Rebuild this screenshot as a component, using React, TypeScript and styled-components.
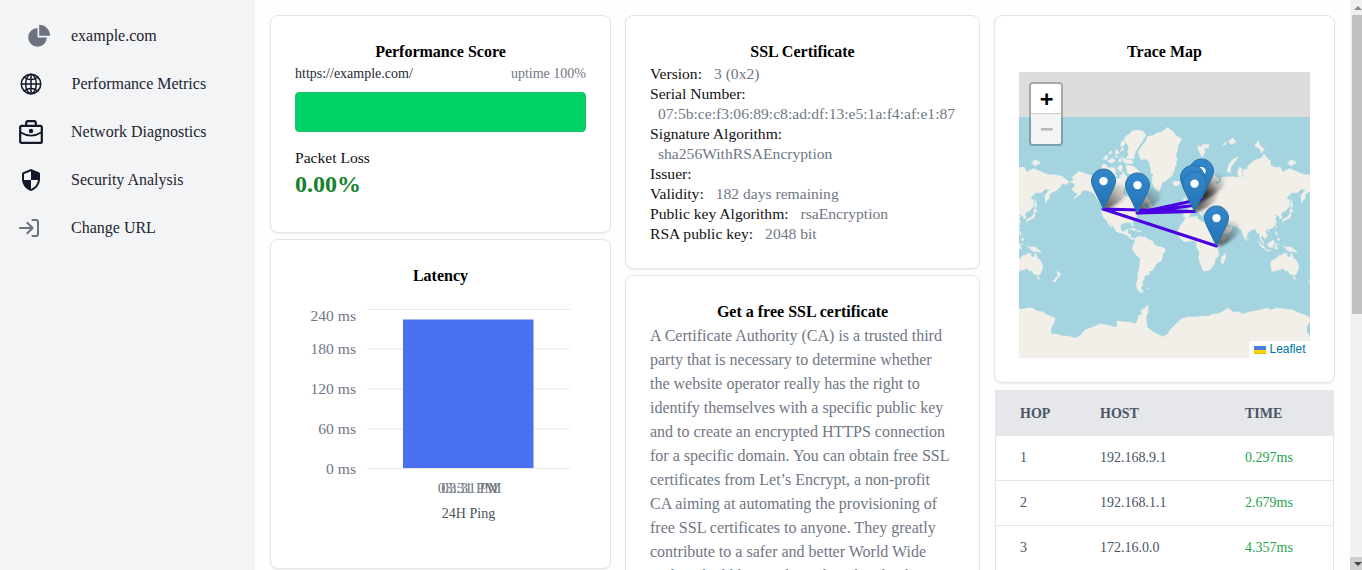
import React from "react";
import styled, { createGlobalStyle } from "styled-components";
import { IoGlobeOutline } from "react-icons/io5";

const GlobalStyle = createGlobalStyle`
  *, *::before, *::after { box-sizing: border-box; }
  html, body { margin: 0; height: 100%; overflow: hidden; background: #fefefe; }
  body { font-family: "Liberation Serif", "Times New Roman", serif; font-size: 16px; line-height: 24px; color: #111827; }
  svg { display: block; flex: none; }
`;

const Page = styled.div`
  display: flex;
  height: 570px;
  overflow: hidden;
`;

const Sidebar = styled.nav`
  width: 255px;
  flex: none;
  background: #f3f4f6;
  padding: 12px 11px;
`;

const NavItem = styled.a<{ $indent?: number }>`
  display: flex;
  align-items: center;
  height: 48px;
  padding-left: ${(p) => p.$indent ?? 8}px;
  color: #1c2430;
`;

const NavIcon = styled.span<{ $muted?: boolean }>`
  display: flex;
  width: 24px;
  color: ${(p) => (p.$muted ? "#6b7280" : "#111827")};
`;

const NavLabel = styled.span<{ $gap?: number }>`
  margin-left: ${(p) => p.$gap ?? 28}px;
  white-space: nowrap;
`;

const Content = styled.main`
  flex: 1;
  min-width: 0;
  display: grid;
  grid-template-columns: 341px 355px 341px;
  column-gap: 14px;
  align-items: start;
  padding: 15px 0 0 15px;
`;

const Column = styled.div`
  display: flex;
  flex-direction: column;
  gap: 6px;
`;

const Card = styled.section<{ $height: number }>`
  height: ${(p) => p.$height}px;
  flex: none;
  padding: 24px;
  background: #fff;
  border: 1px solid #e3e5e8;
  border-radius: 8px;
  box-shadow: 0 1px 2px rgba(0, 0, 0, 0.07);
`;

const CardTitle = styled.h2`
  margin: 0;
  font-size: 16px;
  line-height: 24px;
  font-weight: 700;
  text-align: center;
  color: #000;
`;

const ScoreRow = styled.div`
  display: flex;
  justify-content: space-between;
  font-size: 14px;
  line-height: 20px;
  color: #1f2937;
`;

const Muted = styled.span`
  color: #6f7784;
`;

const ScoreBar = styled.div`
  height: 40px;
  margin: 8px 0 16px;
  border-radius: 4px;
  background: #00d166;
  border: 1px solid #22bd68;
`;

const StatLabel = styled.div`
  font-size: 15.6px;
  line-height: 20px;
  color: #111;
`;

const StatValue = styled.div`
  font-size: 24px;
  line-height: 32px;
  font-weight: 700;
  color: #15832e;
`;

const Details = styled.dl`
  margin: 0;
  font-size: 15.6px;
  line-height: 20px;
`;

const Detail = styled.div`
  display: flex;
  flex-wrap: wrap;
  column-gap: 4px;
`;

const Term = styled.dt`
  color: #111;
`;

const Value = styled.dd`
  margin: 0 0 0 8px;
  color: #6f7784;
`;

const Paragraph = styled.p`
  margin: 0;
  color: #6f7784;
  white-space: pre-line;
`;

const Chart = styled.svg`
  margin-top: 12px;
  font-family: "Liberation Serif", serif;
`;

const MapFrame = styled.div`
  position: relative;
  width: 291px;
  height: 286px;
  margin-top: 8px;
  overflow: hidden;
  background: #ddd;
`;

const ZoomControl = styled.div`
  position: absolute;
  top: 10px;
  left: 10px;
  width: 34px;
  border: 2px solid rgba(0, 0, 0, 0.24);
  border-radius: 4px;
  background-clip: padding-box;
  overflow: hidden;
`;

const ZoomButton = styled.div<{ $disabled?: boolean }>`
  height: 30px;
  font: bold 22px/29px "DejaVu Sans Mono", monospace;
  text-indent: 1px;
  text-align: center;
  color: ${(p) => (p.$disabled ? "#bbb" : "#000")};
  background: ${(p) => (p.$disabled ? "#f4f4f4" : "#fff")};
  border-bottom: ${(p) => (p.$disabled ? "0" : "1px solid #ccc")};
`;

const Attribution = styled.div`
  position: absolute;
  right: 0;
  bottom: 0;
  display: flex;
  align-items: center;
  gap: 3px;
  height: 17px;
  padding: 0 4.5px 0 5px;
  background: rgba(255, 255, 255, 0.85);
  color: #0078a8;
  font: 12px/17px "Liberation Sans", Arial, sans-serif;
`;

const HopTable = styled.table`
  width: 339px;
  margin: 1px 0 0 1px;
  border-spacing: 0;
  table-layout: fixed;
  font-size: 14px;
  line-height: 20px;
  border: 1px solid #e3e5e8;
  border-top: 0;
`;

const HeadCell = styled.th<{ $width?: number }>`
  width: ${(p) => (p.$width ? p.$width + "px" : "auto")};
  height: 46px;
  padding: 2px 0 0 24px;
  text-align: left;
  color: #4b5563;
  background: #e5e7eb;
`;

const Cell = styled.td<{ $good?: boolean }>`
  height: 45px;
  padding: 0 0 0 24px;
  background: #fff;
  border-bottom: 1px solid #e3e5e8;
  color: ${(p) => (p.$good ? "#1fa350" : "#4b5563")};
`;

const Scrollbar = styled.div`
  width: 12px;
  flex: none;
  display: flex;
  flex-direction: column;
  justify-content: space-between;
  background: #f1f1f1;
`;

const ScrollThumb = styled.div`
  height: 299px;
  margin: 0 0 auto 2px;
  background: #c1c1c1;
`;

const ScrollArrow = styled.div<{ $down?: boolean }>`
  height: ${(p) => (p.$down ? 13 : 15)}px;
  padding: 5px 0 0 4px;
  background: ${(p) => (p.$down ? "#d0d0d0" : "#f1f1f1")};
`;

const PieIcon = () => (
  <svg width="24" height="24" viewBox="0 0 24 24" fill="currentColor">
    <path d="M10.5 4.1A9.3 9.3 0 1 0 19.8 13.4H10.5Z" />
    <path d="M12.2.8A10.9 10.9 0 0 1 23 11.7H12.2Z" />
  </svg>
);

const BriefcaseIcon = () => (
  <svg width="24" height="24" viewBox="0 0 24 24" fill="none" stroke="currentColor" strokeWidth="2.2" strokeLinejoin="round">
    <rect x="1.2" y="5.8" width="21.6" height="17" rx="1.4" />
    <path d="M7.2 6V3Q7.2 1.2 9 1.2h6Q16.8 1.2 16.8 3v3" />
    <path d="M1.3 12.3Q12 19 22.7 12.3" strokeWidth="1.8" />
    <circle cx="12" cy="11" r="2.2" fill="currentColor" stroke="none" />
  </svg>
);

const ShieldIcon = () => (
  <svg width="24" height="24" viewBox="0 0 24 24" fill="currentColor">
    <path
      fillRule="evenodd"
      d="M12 1 4.1 4.2Q3 4.7 3 5.8V11c0 5.5 3.8 10.7 9 12 5.2-1.3 9-6.5 9-12V5.8Q21 4.7 19.9 4.2ZM12 12h7c-.5 4.1-3.3 7.8-7 8.9V12H5V6l7-2.8Z"
    />
  </svg>
);

const EnterIcon = () => (
  <svg width="24" height="24" viewBox="0 0 24 24" fill="none" stroke="currentColor" strokeWidth="2" strokeLinecap="round" strokeLinejoin="round">
    <path d="M1 12h12.5M8.3 6.7 13.6 12l-5.3 5.3M13.5 4H17q2 0 2 2v12q0 2-2 2h-3.5" />
  </svg>
);

const MAP_WIDTH = 256;
const MERIDIAN_X = 171;
const EQUATOR_Y = 173;

const project = (lon: number, lat: number) => {
  const rad = (lat * Math.PI) / 180;
  const x = MERIDIAN_X + (lon * MAP_WIDTH) / 360;
  const y = EQUATOR_Y - (Math.log(Math.tan(Math.PI / 4 + rad / 2)) * MAP_WIDTH) / (2 * Math.PI);
  return `${x.toFixed(1)} ${y.toFixed(1)}`;
};

/* Coastlines as "lon,lat" pairs. */
const LAND: string[] = [
  // North and Central America
  "-168,66 -163,67 -166,68.5 -156,71.3 -145,70 -135,69 -128,70 -122,69.5 -115,68.5 -108,68 -102,67.8 -97,68.3 -94,71.5 -91,69.5 -88,68 -82,69.5 -81,67.5 -87,66 -93,62 -94.5,59 -92,57 -86,55.5 -82,55 -82,52.5 -79,51.5 -79,54.5 -76.5,56.5 -78,59.5 -77.5,62.3 -73,62 -69.5,61 -69.5,59 -67,58.5 -64.5,60.3 -62,57.5 -60,55 -56,52.5 -58.5,51 -65,50.2 -70,47.3 -65,49 -64,47 -60.5,46.5 -64,44.6 -67,44.5 -70,43.5 -70.5,41.7 -74,40.5 -75.5,37.5 -76,35 -81,31.5 -80.2,27 -80.7,25.2 -82.7,28 -84,30 -89,30 -94,29.5 -97.3,27.5 -97.7,22 -95.5,18.5 -91,18.7 -90,21 -87,21.4 -88,16 -83.5,15 -83.5,10.5 -79.5,9.5 -77.5,8.5 -80,7.3 -83,8.5 -86,11.5 -88,13.2 -94,16 -99,16.7 -105.5,20 -106,23 -109.5,26.5 -112.5,30 -114.6,31.5 -112,27.5 -109.7,23.2 -112,25 -115,28.5 -117,32.5 -120.5,34.7 -124,40 -124,47 -123,49 -128,51.5 -131,55 -135,58.5 -140,59.8 -146,60.7 -151,60.5 -154,58 -160,55.5 -164,54.6 -158,57.5 -158,58.7 -162,59 -166,61.5 -161,64.5",
  // South America
  "-77.5,8.5 -75,11 -71.5,12.3 -68,11 -62,10.7 -59,8 -52,5 -50,0 -44,-2.5 -39,-3 -35,-5.5 -35,-9 -39,-13 -39,-18 -41,-22 -48,-25.5 -49,-29 -53.5,-34 -58,-34.2 -57,-38 -62,-39 -65,-41 -63.8,-42.5 -67.5,-46 -66,-48 -69,-51 -68,-53 -65.2,-54.8 -70,-55.3 -74,-52.5 -75.5,-48 -73,-42 -73.5,-37 -71.5,-32 -70.3,-23 -70.5,-18 -76,-14 -79,-8 -81.2,-5.5 -80,-2.5 -80,0.5 -77.3,4",
  // Greenland
  "-73,78.2 -70,79.3 -66,80.3 -61,81.2 -60,82 -52,82.2 -47,82.7 -40,82.8 -32,83.6 -24,83 -20,82.2 -12,81.5 -17,80 -18,78.5 -20,77.5 -18,76 -20,75 -19,74 -22,73 -22,71.5 -26,70.5 -23,70 -30,68 -34,66.5 -38,66 -40,65 -41,63 -43,60 -46,60.5 -49,61.5 -51,63.5 -53,65.5 -53.5,68.5 -51,70 -55,70.5 -55,72.5 -58,75.5 -63,76.2 -69,76",
  // Canadian Arctic
  "-90,76.5 -84,76.2 -79,76.3 -78,77.5 -76,78.7 -72,79.8 -68,80.8 -62,82.3 -66,83 -74,83.2 -82,83 -86,82.4 -91,82 -92,81.2 -88,80.3 -86,79.7 -88,78.5 -86,77.5",
  "-90,73.8 -84,73.7 -80,73.5 -76,72.7 -72,71.5 -68,70.3 -66,68.5 -62,67 -64,65 -66,62.7 -72,64.5 -78,64.6 -73,66 -73,68 -77,69.5 -82,70 -88,70.5",
  "-117,69 -116,71 -118,72 -114,73 -108,73 -105,72.5 -105,70 -102,69.2 -108,68.7",
  "-125,72 -123,74.3 -117,74 -116,73 -120,71.5",
  "-98,71.2 -102,72.8 -98,74 -95,73.5 -96,72",
  "-116,75.5 -109,76.5 -105,75.7 -110,74.7",
  "-101,75.2 -98,76.6 -96,75.2",
  "-92,74.8 -86,74.5 -80,74.7 -81,75.7 -90,76 -96,76.8",
  "-98,78.5 -94,80 -90,80.8 -96,81 -96,80 -93,79",
  "-92,81.5 -96,80.8 -98,80 -95,79.8",
  "-122,76 -119,77.2 -115,77.4 -117,76",
  "-115,78 -110,78.7 -111,77.7",
  "-105,77.8 -99,78.1 -104,79.2",
  "-105,76.7 -101,76.9 -104,77.4",
  "-98,69.6 -96,69.4 -96,68.8 -99,69",
  "-87,64 -81,63.7 -80,65.4 -85,66",
  // Caribbean, Atlantic
  "-85,22 -80,23.2 -74.5,20.2 -77.5,19.8",
  "-74,18.5 -73,20 -68.5,18.6 -71,17.8",
  "-59,48 -56,51.5 -53,47 -55,46.9",
  "-24,65.7 -22,66.4 -15,66.3 -14,64.7 -19,63.4 -22.5,64",
  "-61,-52 -58,-51.3 -59,-52.3",
  // British Isles
  "-5,50 1.3,51.2 0,53 -2,55.5 -2,57.5 -5,58.6 -5.5,56 -3,54 -4.5,52",
  "-10,52 -6.3,52.3 -6,54.8 -8.5,55",
  // Eurasia
  "-9.3,38.7 -8.8,43.2 -2,43.5 -1.5,46.5 -4.5,48.4 1.5,50.3 4.5,52.5 8.5,54 8.2,57 10.5,57.5 10.5,54 14,54.2 19,54.5 21.3,57 24,57.2 23.5,59.2 30,60 22.5,60 21.3,62 25.3,65 22,65.6 17.3,61.7 18.7,60 16.5,57 14.2,55.5 12.7,56 11,59 8,58 5.3,59.5 5,62 12,66 15,68.5 20,70 28,71 40,67.8 41,66.4 34.5,66.5 38,64 40,65 44,66.3 44,68.5 54,68.6 60,68.8 68,68.4 67,71 69,73 72.5,72.8 73,70.5 73,68 75,69 74,71 76,72.3 81,72.2 81,73.6 87,75 93,76 99,76.3 104,77.7 108,76.7 113,75.5 113,74 120,73 127,73.2 130,71 140,72.6 152,71 160,69.8 170,69.8 180,69 190,66 186,64.5 180,65 177,62.5 170,60 163,58.5 162,55 157,51 156,57 163,61.5 156,61.5 151,59 143,59.2 135.5,55 140.5,53 140,48 135,43.5 130.5,42.3 127.5,39.5 129.3,36 126.5,34.5 125,38 121.5,39 118,39 122,37 119.3,35 121.7,31 120,26.5 114,22.3 108.3,21.5 106,19 109,12.5 105,8.7 102.5,12.5 100,13.2 99.5,10 103.3,4 103.5,1.4 100.5,5.5 98.5,9 98,15.5 94.3,16.5 91.8,22.5 87,21.2 80.2,15.5 80,11 77.5,8 74,15 72.7,21 69,22.3 66.5,25.3 57.5,26 50.5,29.8 48,30 51,25 54,24.2 56.3,26 59.5,22.5 55,17.2 45,12.8 42.8,16 39,21.2 35,28 34,31.5 36,36.5 30.5,36.5 27,37.3 26.3,40 31,41.2 41.5,41.5 37,45 39,47 35,46.2 33.5,44.5 31,46.5 28,44 28,41.5 23.5,40.5 24,37.8 22.3,36.5 19.5,41 13.5,45.5 18.3,40 16,38 12.5,41.5 9,44.3 3.2,43.3 3,41.7 -0.3,39 -2,36.8 -5.5,36.1 -9,37",
  // Africa
  "-6,35.8 10,37.3 11,34 19,30.5 22,32.7 32.3,31.2 33,28 37.3,21 39.5,15.5 43.2,11.7 51.2,11.8 47,4 41,-2 39,-6 40.5,-14.5 35,-20 35.3,-24 32.5,-27.5 28,-33 20,-34.8 18,-33 15,-26.5 12,-17.5 13.5,-11 9,-1 9.5,4 4.5,6.3 -4,5.2 -8,4.4 -13,8.7 -17,14.5 -16.5,21 -13,27.5 -9.7,30",
  "44,-20 44.5,-16.5 49.5,-12.2 50.3,-15.5 47,-25 44,-25",
  // Islands of Asia
  "80,6.3 80,9.5 81.8,7",
  "95.5,5.5 104,-2 105.7,-5.8 102,-4",
  "105.3,-6.5 108.5,-6.8 114.3,-8 114,-8.6 107,-7.7",
  "109,1.5 117,7 119,5 116,-4 110.5,-3",
  "119.5,-5.5 119.7,0.7 125,1.5 120.5,0.3 123,-5",
  "120.3,16 121,18.5 122.2,18 121.7,14 124,13 123,12.6",
  "122,7.5 126,9.5 126,6.3",
  "131,-0.8 135,-3.3 141,-2.6 147,-6.5 151,-10.3 143,-9 138,-8.3",
  "109,18.5 109.5,20 111,19.5",
  "120.2,22.8 121.5,25.2 121,22",
  "130,31.3 130,33.8 135,35.5 139,38 141,41.3 142,39 140.5,35.7 136,33.7",
  "140,42 141.7,45.4 145.4,43.3 143,42",
  "142,46.2 142,54.2 144.5,49 143.3,46.5",
  // Australia, New Zealand
  "114,-22 113.5,-26 115,-34.2 118,-35 124,-33 131,-31.5 135.5,-34.8 138,-33 140,-37.8 146.5,-39 150,-37.3 153.3,-28.5 149,-20.5 146,-18.8 142.5,-10.8 141,-17.3 136,-15.5 136.8,-12.2 131,-11.5 129,-15 126,-14 122,-18",
  "144.8,-40.8 148.2,-40.9 147,-43.6",
  "172.7,-34.5 178.4,-37.7 175,-41.5 174,-39.2",
  "172.7,-40.6 174.2,-41.8 170.5,-46 166.6,-46",
  // Arctic islands
  "11,79.2 11,80 16,79.7 18,80.3 27,80.3 26,79.5 20,79.3 21,78.3 17,76.7 14,78",
  "46,80.3 51,80.9 50,80.2",
  "54,81 60,81.7 65,80.9 58,80.3",
  "52,71.3 55,74.5 60,76 68,77 65,75.8 57,73 57,70.7",
  "91,80 96,81.2 98,80.2 101,79.7 105,79 100,78 99,79",
  "138,74.8 142,76 150,75 142,73.6",
];

const landPath = LAND.map(
  (poly) => "M" + poly.split(" ").map((pair) => {
    const [lon, lat] = pair.split(",").map(Number);
    return project(lon, lat);
  }).join("L") + "Z"
).join("");

const ANTARCTICA =
  "M0 286V237L5 237 8 236 13 236 18 239 24 240 28 243 36 246 35 251 32 256 32 262 38 262 43 264 49 264 56 266 61 264 66 258 74 255 81 252 89 253 95 255 98 255 98 249 105 250 111 250 116 252 119 248 119 244 123 242 122 238 126 236 129 233 129 240 127 245 128 255 134 260 138 262 144 265 149 262 151 258 157 252 162 247 169 245 178 245 184 244 190 244 194 242 198 242 203 240 209 236 214 240 220 240 224 242 230 240 236 239 241 238 248 236 252 238 258 236 265 237 274 238 280 241 286 243 291 246V286Z";

const TRACE = "M182.5 127 118 141 174 133.5M118 141 175.5 139.5 84 137 197.5 174";

const MARKERS: [number, number][] = [
  [182.5, 127.5],
  [173.5, 134],
  [84.5, 137.5],
  [118.5, 141.5],
  [175.5, 140],
  [197.5, 174.5],
];

const WorldMap = () => (
  <svg width="291" height="286" viewBox="0 0 291 286">
    <defs>
      <linearGradient id="pin" x1="0" y1="0" x2="0" y2="1">
        <stop offset="0" stopColor="#3388cb" />
        <stop offset="1" stopColor="#2373b5" />
      </linearGradient>
      <linearGradient id="cast" x1="0" y1="1" x2="1" y2="0">
        <stop offset="0" stopColor="#000" stopOpacity="0.7" />
        <stop offset="0.6" stopColor="#000" stopOpacity="0.25" />
        <stop offset="1" stopColor="#000" stopOpacity="0" />
      </linearGradient>
      <filter id="soft" x="-50%" y="-50%" width="200%" height="200%">
        <feGaussianBlur stdDeviation="1.8" />
      </filter>
    </defs>
    <rect y="45" width="291" height="241" fill="#a3d4e0" />
    <g fill="#f2efe9" stroke="#f2efe9" strokeWidth="0.5" strokeLinejoin="round">
      {[-MAP_WIDTH, 0, MAP_WIDTH].map((shift) => (
        <path key={shift} d={landPath} transform={`translate(${shift} 0)`} />
      ))}
      <path d={ANTARCTICA} />
    </g>
    <path d="M291 250 288 254 288 260 291 264Z" fill="#a3d4e0" />
    {MARKERS.map(([x, y], i) => (
      <path
        key={i}
        d="M0 0C2-12 6-22 14-25C23-27 26-18 20-11C14-5 7-1 0 0Z"
        transform={`translate(${x} ${y})`}
        fill="url(#cast)"
        filter="url(#soft)"
      />
    ))}
    <path d={TRACE} fill="none" stroke="#4a00e0" strokeWidth="3" strokeLinejoin="round" strokeLinecap="round" />
    {MARKERS.map(([x, y], i) => (
      <g key={i} transform={`translate(${x - 12.5} ${y - 41})`}>
        <path
          d="M12.5.5C5.9.5.5 5.9.5 12.5c0 3.4 1.4 6 2.8 8.9L12.5 40.5l9.2-19.1c1.4-2.9 2.8-5.5 2.8-8.9C24.5 5.9 19.1.5 12.5.5Z"
          fill="url(#pin)"
          stroke="#2a6ea3"
          strokeWidth="1"
        />
        <circle cx="12.5" cy="12.6" r="4.2" fill="#fff" />
      </g>
    ))}
  </svg>
);

const TICKS = [
  { label: "240 ms", line: 9.5, text: 21 },
  { label: "180 ms", line: 49, text: 54 },
  { label: "120 ms", line: 89, text: 94 },
  { label: "60 ms", line: 129, text: 134 },
  { label: "0 ms", line: 168.5, text: 174 },
];

const LatencyChart = () => (
  <Chart width="291" height="230" viewBox="0 0 291 230">
    {TICKS.map((t) => (
      <g key={t.label}>
        <line x1="72" x2="275" y1={t.line} y2={t.line} stroke="#e7e8ea" />
        <text x="61" y={t.text} textAnchor="end" fontSize="15.6" fill="#6f7784">{t.label}</text>
      </g>
    ))}
    <rect x="108" y="19.5" width="130.5" height="148.5" fill="#4870f0" />
    <text x="172.8" y="193" textAnchor="middle" fontSize="15.2" fill="#6f7784">03:31 PM</text>
    <text x="176.3" y="193" textAnchor="middle" fontSize="15.2" fill="#6f7784">03:31 PM</text>
    <text x="173.5" y="218" textAnchor="middle" fontSize="14" fill="#4b5260">24H Ping</text>
  </Chart>
);

const CERTIFICATE = [
  ["Version:", "3 (0x2)"],
  ["Serial Number:", "07:5b:ce:f3:06:89:c8:ad:df:13:e5:1a:f4:af:e1:87"],
  ["Signature Algorithm:", "sha256WithRSAEncryption"],
  ["Issuer:", ""],
  ["Validity:", "182 days remaining"],
  ["Public key Algorithm:", "rsaEncryption"],
  ["RSA public key:", "2048 bit"],
];

const HOPS = [
  ["1", "192.168.9.1", "0.297ms"],
  ["2", "192.168.1.1", "2.679ms"],
  ["3", "172.16.0.0", "4.357ms"],
];

const FREE_SSL = `A Certificate Authority (CA) is a trusted third
party that is necessary to determine whether
the website operator really has the right to
identify themselves with a specific public key
and to create an encrypted HTTPS connection
for a specific domain. You can obtain free SSL
certificates from Let’s Encrypt, a non-profit
CA aiming at automating the provisioning of
free SSL certificates to anyone. They greatly
contribute to a safer and better World Wide
Web and add lots to the web and make the`;

export default function App() {
  return (
    <>
      <GlobalStyle />
      <Page>
        <Sidebar>
          <NavItem $indent={16}>
            <NavIcon $muted><PieIcon /></NavIcon>
            <NavLabel $gap={20}>example.com</NavLabel>
          </NavItem>
          <NavItem>
            <NavIcon><IoGlobeOutline size={24} /></NavIcon>
            <NavLabel $gap={28.5}>Performance Metrics</NavLabel>
          </NavItem>
          <NavItem>
            <NavIcon><BriefcaseIcon /></NavIcon>
            <NavLabel>Network Diagnostics</NavLabel>
          </NavItem>
          <NavItem>
            <NavIcon><ShieldIcon /></NavIcon>
            <NavLabel>Security Analysis</NavLabel>
          </NavItem>
          <NavItem>
            <NavIcon $muted><EnterIcon /></NavIcon>
            <NavLabel>Change URL</NavLabel>
          </NavItem>
        </Sidebar>
        <Content>
          <Column>
            <Card $height={218}>
              <CardTitle>Performance Score</CardTitle>
              <ScoreRow>
                <span>https://example.com/</span>
                <Muted>uptime 100%</Muted>
              </ScoreRow>
              <ScoreBar />
              <StatLabel>Packet Loss</StatLabel>
              <StatValue>0.00%</StatValue>
            </Card>
            <Card $height={330}>
              <CardTitle>Latency</CardTitle>
              <LatencyChart />
            </Card>
          </Column>
          <Column>
            <Card $height={254}>
              <CardTitle>SSL Certificate</CardTitle>
              <Details>
                {CERTIFICATE.map(([term, value]) => (
                  <Detail key={term}>
                    <Term>{term}</Term>
                    {value && <Value>{value}</Value>}
                  </Detail>
                ))}
              </Details>
            </Card>
            <Card $height={360}>
              <CardTitle>Get a free SSL certificate</CardTitle>
              <Paragraph>{FREE_SSL}</Paragraph>
            </Card>
          </Column>
          <Column>
            <Card $height={368}>
              <CardTitle>Trace Map</CardTitle>
              <MapFrame>
                <WorldMap />
                <ZoomControl>
                  <ZoomButton>+</ZoomButton>
                  <ZoomButton $disabled>−</ZoomButton>
                </ZoomControl>
                <Attribution>
                  <svg width="12" height="8" viewBox="0 0 12 8">
                    <path fill="#4C7BE1" d="M0 0h12v4H0z" />
                    <path fill="#FFD500" d="M0 4h12v3H0z" />
                    <path fill="#E0BC00" d="M0 7h12v1H0z" />
                  </svg>
                  Leaflet
                </Attribution>
              </MapFrame>
            </Card>
            <HopTable>
              <thead>
                <tr>
                  <HeadCell $width={80}>HOP</HeadCell>
                  <HeadCell $width={145}>HOST</HeadCell>
                  <HeadCell>TIME</HeadCell>
                </tr>
              </thead>
              <tbody>
                {HOPS.map(([hop, host, time]) => (
                  <tr key={hop}>
                    <Cell>{hop}</Cell>
                    <Cell>{host}</Cell>
                    <Cell $good>{time}</Cell>
                  </tr>
                ))}
              </tbody>
            </HopTable>
          </Column>
        </Content>
        <Scrollbar>
          <ScrollArrow>
            <svg width="8" height="5" viewBox="0 0 8 5"><path d="M0 5 4 1l4 4Z" fill="#8a8a8a" /></svg>
          </ScrollArrow>
          <ScrollThumb />
          <ScrollArrow $down>
            <svg width="8" height="5" viewBox="0 0 8 5"><path d="M0 0h8L4 4Z" fill="#444" /></svg>
          </ScrollArrow>
        </Scrollbar>
      </Page>
    </>
  );
}
